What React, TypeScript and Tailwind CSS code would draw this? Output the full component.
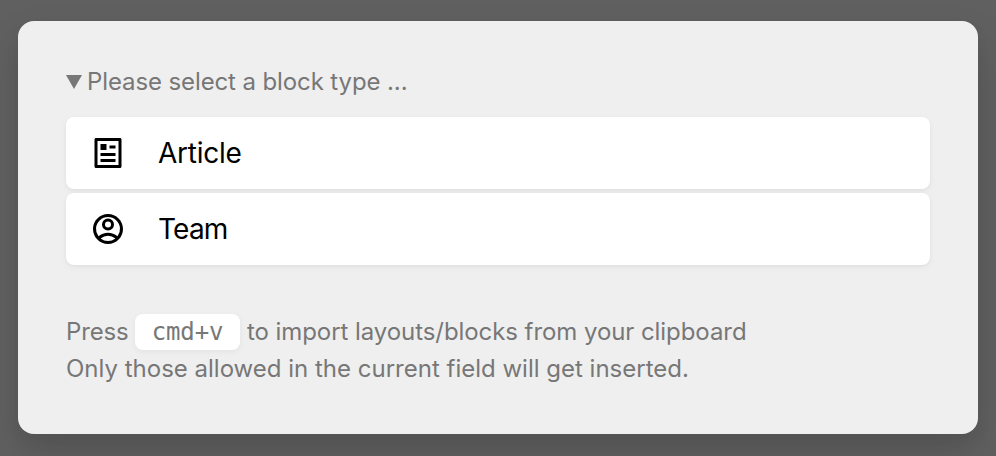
import React from "react";

function ArticleIcon() {
  return (
    <svg viewBox="0 0 24 24" className="size-9" fill="currentColor">
      <path d="M20 22H4C3.44772 22 3 21.5523 3 21V3C3 2.44772 3.44772 2 4 2H20C20.5523 2 21 2.44772 21 3V21C21 21.5523 20.5523 22 20 22ZM19 20V4H5V20H19ZM7 6H11V10H7V6ZM7 12H17V14H7V12ZM7 16H17V18H7V16ZM13 7H17V9H13V7Z" />
    </svg>
  );
}

function TeamIcon() {
  return (
    <svg viewBox="0 0 24 24" className="size-9" fill="currentColor">
      <path d="M12 2C6.477 2 2 6.477 2 12s4.477 10 10 10 10-4.477 10-10S17.523 2 12 2ZM7.076 18.324A8.2 8.2 0 0 1 12 16.54a8.2 8.2 0 0 1 4.924 1.784A7.95 7.95 0 0 1 12 20a7.95 7.95 0 0 1-4.924-1.676ZM18.35 16.876A10.1 10.1 0 0 0 12 14.5a10.1 10.1 0 0 0-6.35 2.376A8 8 0 1 1 18.35 16.876ZM12 5a4 4 0 1 0 0 8 4 4 0 0 0 0-8Zm0 2a2 2 0 1 1 0 4 2 2 0 0 1 0-4Z" />
    </svg>
  );
}

function BlockButton({ icon, children }: { icon: React.ReactNode; children: React.ReactNode }) {
  return (
    <button className="flex h-[72px] w-full items-center rounded-lg bg-white pl-6 text-left text-[28px] leading-9 text-black shadow-[0_2px_6px_rgba(0,0,0,0.05),0_1px_3px_rgba(0,0,0,0.03)]">
      {icon}
      <span className="ml-8">{children}</span>
    </button>
  );
}

export default function App() {
  return (
    <div className="h-[456px] w-[996px] overflow-hidden bg-[#606060] px-[18px] pt-[21px] font-['Inter',sans-serif]">
      <div className="h-[413px] rounded-2xl bg-[#efefef] px-12 pt-[43px] text-[#777] shadow-[0_20px_40px_rgba(0,0,0,0.13),0_8px_16px_rgba(0,0,0,0.04)]">
        <div className="flex h-9 items-center text-[24px] leading-9">
          <svg viewBox="0 0 16 14" className="mr-[5px] h-3.5 w-4" fill="currentColor">
            <path d="M0 0H16L8 14Z" />
          </svg>
          <span className="whitespace-nowrap tracking-[-0.11px]">Please select a block type ...</span>
        </div>
        <div className="mt-[17px] flex flex-col gap-1">
          <BlockButton icon={<ArticleIcon />}>
            <span className="tracking-[-0.25px]">Article</span>
          </BlockButton>
          <BlockButton icon={<TeamIcon />}>
            <span className="tracking-[-0.8px]">Team</span>
          </BlockButton>
        </div>
        <div className="mt-12 text-[24px]">
          <div className="flex h-[38px] items-center whitespace-nowrap pb-px leading-9">
            <span className="w-[62px] tracking-[-0.15px]">Press</span>
            <kbd className="mx-[7px] flex h-9 w-[105px] items-center justify-center rounded-lg bg-white pt-px font-['DejaVu_Sans_Mono',monospace] text-[24px] tracking-[-0.1px] shadow-[0_2px_6px_rgba(0,0,0,0.05)]">
              cmd+v
            </kbd>
            <span className="tracking-[-0.07px]">to import layouts/blocks from your clipboard</span>
          </div>
          <div className="h-9 whitespace-nowrap leading-9">
            Only those allowed in the current field will get inserted.
          </div>
        </div>
      </div>
    </div>
  );
}
